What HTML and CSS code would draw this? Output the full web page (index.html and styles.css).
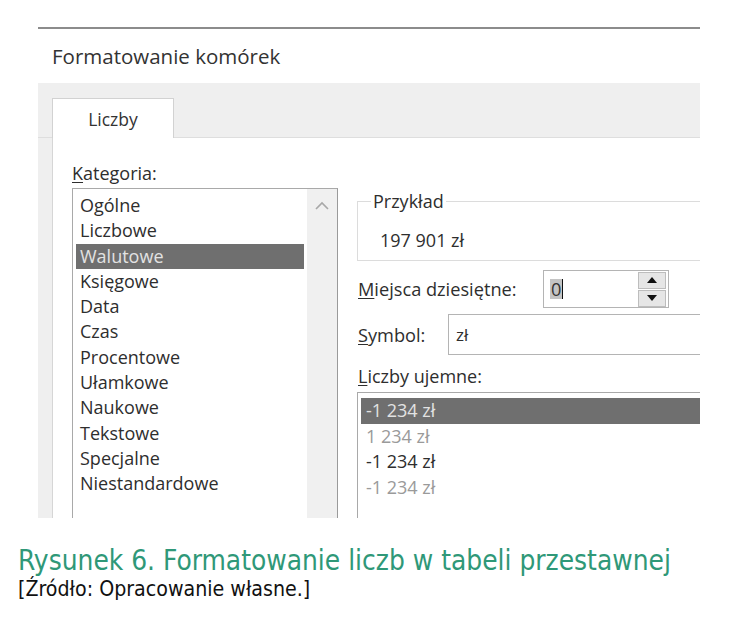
FILE: index.html
```html
<!DOCTYPE html>
<html lang="pl">
<head>
    <meta charset="UTF-8">
    <meta name="viewport" content="width=device-width, initial-scale=1.0">
    <title>Formatowanie komórek</title>
    <link rel="stylesheet" href="styles.css">
</head>
<body>
    <div class="dialog">
        <div class="title">Formatowanie komórek</div>
        <div class="tabbar">
            <div class="tab">Liczby</div>
        </div>
        <div class="frame">
            <div class="panel">
                <!-- Kategoria -->
                <div class="left">
                    <div class="label"><u>K</u>ategoria:</div>
                    <div class="listbox">
                        <ul class="items">
                            <li>Ogólne</li>
                            <li>Liczbowe</li>
                            <li class="selected">Walutowe</li>
                            <li>Księgowe</li>
                            <li>Data</li>
                            <li>Czas</li>
                            <li>Procentowe</li>
                            <li>Ułamkowe</li>
                            <li>Naukowe</li>
                            <li>Tekstowe</li>
                            <li>Specjalne</li>
                            <li>Niestandardowe</li>
                        </ul>
                        <div class="scrollbar">
                            <svg width="14" height="9" viewBox="0 0 14 9"><path d="M1 8 L7 2 L13 8" fill="none" stroke="#a8a8a8" stroke-width="1.6"/></svg>
                        </div>
                    </div>
                </div>

                <!-- Opcje -->
                <div class="right">
                    <fieldset class="sample">
                        <legend>Przykład</legend>
                        <div class="sample-value">197 901 zł</div>
                    </fieldset>
                    <div class="row">
                        <span class="row-label"><u>M</u>iejsca dziesiętne:</span>
                        <div class="spinner">
                            <div class="spin-value"><span class="sel">0</span><span class="caret"></span></div>
                            <div class="spin-buttons">
                                <div class="spin-btn"><svg width="10" height="6" viewBox="0 0 10 6"><path d="M0 6 L5 0 L10 6 Z" fill="#111"/></svg></div>
                                <div class="spin-btn"><svg width="10" height="6" viewBox="0 0 10 6"><path d="M0 0 L5 6 L10 0 Z" fill="#111"/></svg></div>
                            </div>
                        </div>
                    </div>
                    <div class="row symbol-row">
                        <span class="row-label"><u>S</u>ymbol:</span>
                        <div class="combo">zł</div>
                    </div>
                    <div class="label neg-label"><u>L</u>iczby ujemne:</div>
                    <ul class="neglist">
                        <li class="selected">-1 234 zł</li>
                        <li class="faint">1 234 zł</li>
                        <li>-1 234 zł</li>
                        <li class="faint">-1 234 zł</li>
                    </ul>
                </div>
            </div>
        </div>
    </div>

    <div class="caption">Rysunek 6. Formatowanie liczb w tabeli przestawnej</div>
    <div class="source">[Źródło: Opracowanie własne.]</div>
</body>
</html>
```

FILE: styles.css
```css
body{
    margin: 0;
    padding: 0;
    background: #fff;
    font-family: 'Open Sans', 'Noto Sans', sans-serif;
    color: #2e2e2e;
}
u{
    text-decoration-thickness: 1px;
    text-underline-offset: 2px;
}
.dialog{
    margin: 27px 0 0 38px;
    width: 662px;
    border-top: 2px solid #8c8c8c;
}
.title{
    height: 54px;
    padding-left: 14px;
    font-size: 20.5px;
    line-height: 54px;
    color: #333;
}
.tabbar{
    height: 54px;
    background: #efefef;
    padding-left: 14px;
    display: flex;
    align-items: flex-end;
    border-bottom: 1px solid #dedede;
}
.tab{
    width: 120px;
    height: 39px;
    margin-bottom: -1px;
    background: #fff;
    border: 1px solid #d2d2d2;
    border-bottom: none;
    font-size: 17.5px;
    line-height: 40px;
    text-align: center;
    color: #333;
    position: relative;
    z-index: 1;
}
.frame{
    background: #efefef;
    padding-left: 14px;
    height: 380px;
}
.panel{
    height: 100%;
    background: #fff;
    border-left: 1px solid #d6d6d6;
    display: flex;
    gap: 19px;
    padding-left: 19px;
    overflow: hidden;
}
.left{
    width: 266px;
    flex-shrink: 0;
}
.label{
    font-size: 18px;
    line-height: 24px;
    margin-top: 23px;
    margin-bottom: 3px;
}
.listbox{
    display: flex;
    height: 400px;
    border: 1px solid #a9a9a9;
    border-right: 1px solid #9a9a9a;
}
.items{
    list-style: none;
    margin: 0;
    padding: 4px 3px;
    flex: 1;
}
.items li, .neglist li{
    height: 25.3px;
    line-height: 25px;
    font-size: 18px;
    padding-left: 4px;
    white-space: nowrap;
}
.items li.selected, .neglist li.selected{
    background: #6f6f6f;
    color: #e2e2e2;
}
.scrollbar{
    width: 30px;
    background: #f0f0f0;
    display: flex;
    justify-content: center;
    padding-top: 12px;
    box-sizing: border-box;
}
.scrollbar svg{
    display: block;
}
.right{
    width: 400px;
    flex-shrink: 0;
}
.sample{
    margin: 52px 0 0 0;
    padding: 0 0 5px 13px;
    border: 1px solid #dcdcdc;
}
.sample legend{
    padding: 0 2px;
    font-size: 18px;
    line-height: 22px;
}
.sample-value{
    padding-left: 9px;
    font-size: 18px;
    line-height: 30px;
    margin-top: 13px;
}
.row{
    display: flex;
    align-items: center;
    margin-top: 9px;
    font-size: 18.2px;
}
.row-label{
    width: 185px;
    flex-shrink: 0;
    padding-left: 1px;
}
.spinner{
    width: 122px;
    height: 36px;
    border: 1px solid #b4b4b4;
    display: flex;
    align-items: center;
    justify-content: space-between;
    padding-right: 2px;
}
.spin-value{
    padding-left: 6px;
    display: flex;
    align-items: center;
}
.sel{
    background: #c4c4c4;
    color: #333;
    line-height: 20px;
    padding: 0 1px;
}
.caret{
    width: 1px;
    height: 20px;
    background: #111;
}
.spin-buttons{
    display: flex;
    flex-direction: column;
    gap: 1px;
}
.spin-btn{
    width: 26px;
    height: 15px;
    background: #e6e6e6;
    border: 1px solid #bdbdbd;
    display: flex;
    align-items: center;
    justify-content: center;
}
.symbol-row{
    margin-top: 6px;
}
.symbol-row .row-label{
    width: 90px;
}
.combo{
    flex: 1;
    height: 39px;
    border: 1px solid #b4b4b4;
    line-height: 39px;
    padding-left: 7px;
    font-size: 17px;
}
.neg-label{
    margin-top: 9px;
    margin-bottom: 4px;
    padding-left: 1px;
}
.neglist{
    list-style: none;
    margin: 0;
    padding: 5px 3px 3px;
    height: 200px;
    border: 1px solid #a9a9a9;
}
.neglist li{
    height: 25.5px;
    padding-left: 5px;
}
.neglist li.faint{
    color: #9a9a9a;
}
.caption{
    margin: 27px 0 0 18px;
    font-family: 'DejaVu Sans Condensed', 'Roboto', sans-serif;
    font-stretch: condensed;
    font-size: 27.8px;
    line-height: 32px;
    color: #2f9878;
}
.source{
    margin-left: 18px;
    font-family: 'DejaVu Sans Condensed', 'Roboto', sans-serif;
    font-stretch: condensed;
    font-size: 21.2px;
    line-height: 24px;
    color: #111;
}
```
